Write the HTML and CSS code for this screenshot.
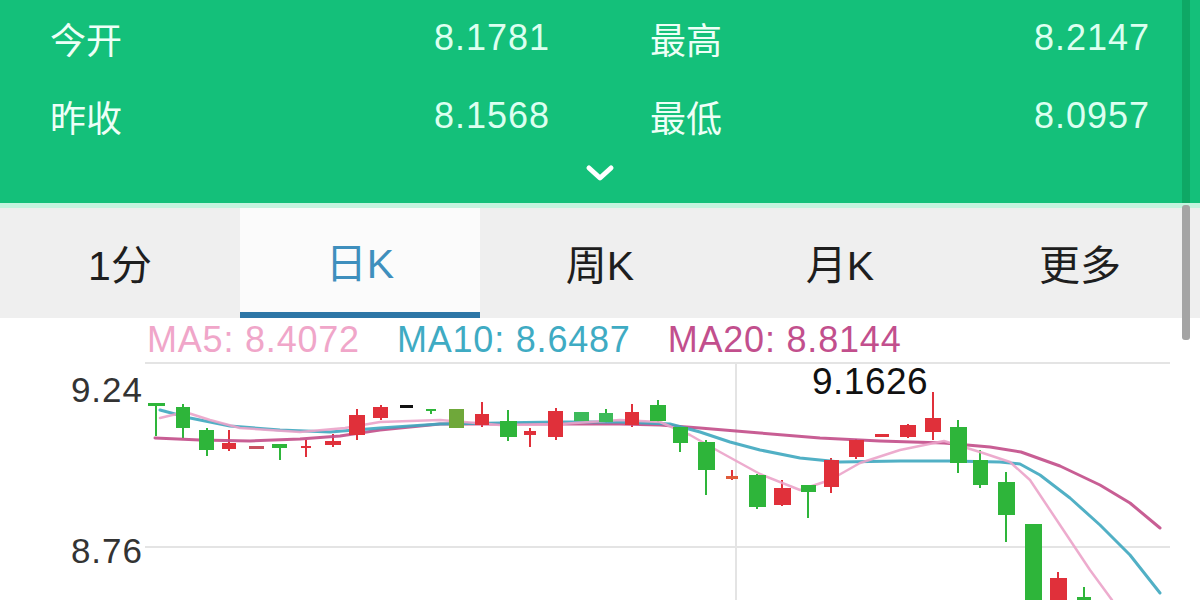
FILE: index.html
```html
<!DOCTYPE html>
<html lang="zh-CN">
<head>
<meta charset="utf-8">
<title>K线</title>
<link rel="stylesheet" href="styles.css">
</head>
<body>
<div class="app">
  <header class="quote">
    <div class="quote-grid">
      <div class="cell"><span class="label">今开</span><span class="value">8.1781</span></div>
      <div class="cell"><span class="label">最高</span><span class="value">8.2147</span></div>
      <div class="cell"><span class="label">昨收</span><span class="value">8.1568</span></div>
      <div class="cell"><span class="label">最低</span><span class="value">8.0957</span></div>
    </div>
    <div class="expand">
      <svg class="chevron" width="30" height="18" viewBox="0 0 30 18"><polyline points="4,4 15,14 26,4" fill="none" stroke="#ffffff" stroke-width="5" stroke-linecap="round" stroke-linejoin="round"/></svg>
    </div>
  </header>
  <nav class="tabs">
    <div class="tab">1分</div>
    <div class="tab active">日K</div>
    <div class="tab">周K</div>
    <div class="tab">月K</div>
    <div class="tab">更多</div>
  </nav>
  <div class="legend">
    <span class="ma5">MA5: 8.4072</span>
    <span class="ma10">MA10: 8.6487</span>
    <span class="ma20">MA20: 8.8144</span>
  </div>
  <div class="chart">
    <svg class="chart-svg" width="1200" height="238" viewBox="0 362 1200 238">
      <g class="grid" stroke="#e4e4e4" stroke-width="2">
        <line x1="145" y1="363" x2="1170" y2="363"/>
        <line x1="145" y1="547" x2="1170" y2="547"/>
        <line x1="736" y1="363" x2="736" y2="600"/>
      </g>
      <text class="axis" x="143" y="402" text-anchor="end">9.24</text>
      <text class="axis" x="143" y="563" text-anchor="end">8.76</text>
      <text class="peak" x="812" y="394">9.1626</text>
      <g class="wicks" stroke-width="2">
        <line x1="156" y1="403" x2="156" y2="436" stroke="#2eb53a"/>
        <line x1="183" y1="404" x2="183" y2="438" stroke="#2eb53a"/>
        <line x1="207" y1="428" x2="207" y2="456" stroke="#2eb53a"/>
        <line x1="229" y1="430" x2="229" y2="451" stroke="#e0303a"/>
        <line x1="280" y1="444" x2="280" y2="460" stroke="#2eb53a"/>
        <line x1="306" y1="440" x2="306" y2="457" stroke="#e0303a"/>
        <line x1="333" y1="434" x2="333" y2="447" stroke="#e0303a"/>
        <line x1="357" y1="409" x2="357" y2="440" stroke="#e0303a"/>
        <line x1="381" y1="405" x2="381" y2="420" stroke="#e0303a"/>
        <line x1="431" y1="409" x2="431" y2="414" stroke="#2eb53a"/>
        <line x1="482" y1="402" x2="482" y2="427" stroke="#e0303a"/>
        <line x1="508" y1="410" x2="508" y2="441" stroke="#2eb53a"/>
        <line x1="530" y1="428" x2="530" y2="447" stroke="#e0303a"/>
        <line x1="556" y1="408" x2="556" y2="440" stroke="#e0303a"/>
        <line x1="606" y1="409" x2="606" y2="423" stroke="#2eb53a"/>
        <line x1="632" y1="404" x2="632" y2="427" stroke="#e0303a"/>
        <line x1="658" y1="400" x2="658" y2="423" stroke="#2eb53a"/>
        <line x1="680" y1="425" x2="680" y2="452" stroke="#2eb53a"/>
        <line x1="706" y1="440" x2="706" y2="495" stroke="#2eb53a"/>
        <line x1="732" y1="470" x2="732" y2="480" stroke="#e0303a"/>
        <line x1="757" y1="474" x2="757" y2="509" stroke="#2eb53a"/>
        <line x1="782" y1="480" x2="782" y2="506" stroke="#e0303a"/>
        <line x1="808" y1="485" x2="808" y2="518" stroke="#2eb53a"/>
        <line x1="831" y1="458" x2="831" y2="493" stroke="#e0303a"/>
        <line x1="856" y1="439" x2="856" y2="459" stroke="#e0303a"/>
        <line x1="908" y1="424" x2="908" y2="438" stroke="#e0303a"/>
        <line x1="933" y1="392" x2="933" y2="440" stroke="#e0303a"/>
        <line x1="958" y1="420" x2="958" y2="473" stroke="#2eb53a"/>
        <line x1="980" y1="450" x2="980" y2="488" stroke="#2eb53a"/>
        <line x1="1006" y1="472" x2="1006" y2="542" stroke="#2eb53a"/>
        <line x1="1058" y1="572" x2="1058" y2="600" stroke="#e0303a"/>
        <line x1="1084" y1="587" x2="1084" y2="600" stroke="#2eb53a"/>
      </g>
      <g class="ma">
        <path d="M155,438 L200,440 L250,441 L300,439 L340,436 L380,430 L440,424 L500,424 L560,424 L620,424 L660,425 L700,428 L760,433 L820,438 L880,441 L944,443 L990,447 L1021,452 L1060,466 L1100,485 L1130,503 L1160,528" stroke="#c24d88" stroke-width="3"/>
        <path d="M160,410 L190,418 L230,426 L280,430 L330,432 L380,428 L440,424 L500,423 L560,422 L620,422 L670,424 L700,432 L730,442 L760,450 L800,458 L840,462 L900,461 L950,461 L1000,462 L1020,464 L1040,475 L1070,498 L1100,525 L1130,555 L1160,593" stroke="#3ea7bf" stroke-width="3"/>
        <path d="M160,418 L185,412 L210,420 L240,428 L300,432 L345,428 L380,422 L440,420 L500,425 L560,424 L620,420 L660,422 L690,435 L720,452 L760,474 L800,490 L830,480 L860,463 L900,450 L944,441 L980,452 L1010,462 L1030,480 L1060,525 L1090,570 L1112,600" stroke="#eba3c9" stroke-width="2.5"/>
      </g>
      <g class="bodies">
        <rect x="148" y="403" width="17" height="3" fill="#2eb53a"/>
        <rect x="176" y="407" width="14" height="21" fill="#2eb53a"/>
        <rect x="199" y="430" width="15" height="20" fill="#2eb53a"/>
        <rect x="222" y="443" width="14" height="6" fill="#e0303a"/>
        <rect x="249" y="446" width="15" height="3" fill="#c85060"/>
        <rect x="272" y="444" width="15" height="4" fill="#2eb53a"/>
        <rect x="301" y="446" width="10" height="2" fill="#e0303a"/>
        <rect x="325" y="441" width="16" height="4" fill="#e0303a"/>
        <rect x="349" y="415" width="16" height="20" fill="#e0303a"/>
        <rect x="373" y="407" width="15" height="11" fill="#e0303a"/>
        <rect x="400" y="405" width="13" height="3" fill="#111111"/>
        <rect x="426" y="409" width="10" height="2" fill="#2eb53a"/>
        <rect x="449" y="409" width="15" height="19" fill="#6fa83a"/>
        <rect x="475" y="414" width="14" height="11" fill="#e0303a"/>
        <rect x="500" y="421" width="17" height="16" fill="#2eb53a"/>
        <rect x="524" y="431" width="12" height="4" fill="#e0303a"/>
        <rect x="548" y="411" width="15" height="26" fill="#e0303a"/>
        <rect x="574" y="412" width="15" height="9" fill="#3dba5a"/>
        <rect x="599" y="413" width="14" height="9" fill="#3dba5a"/>
        <rect x="625" y="412" width="14" height="13" fill="#e0303a"/>
        <rect x="650" y="405" width="16" height="16" fill="#2eb53a"/>
        <rect x="673" y="427" width="15" height="16" fill="#2eb53a"/>
        <rect x="698" y="442" width="17" height="28" fill="#2eb53a"/>
        <rect x="726" y="476" width="12" height="3" fill="#e05a3a"/>
        <rect x="749" y="475" width="17" height="32" fill="#2eb53a"/>
        <rect x="774" y="488" width="17" height="17" fill="#e0303a"/>
        <rect x="801" y="485" width="15" height="7" fill="#2eb53a"/>
        <rect x="824" y="460" width="15" height="27" fill="#e0303a"/>
        <rect x="849" y="440" width="15" height="17" fill="#e0303a"/>
        <rect x="875" y="434" width="14" height="3" fill="#e0303a"/>
        <rect x="900" y="425" width="16" height="12" fill="#e0303a"/>
        <rect x="925" y="418" width="16" height="14" fill="#e0303a"/>
        <rect x="950" y="427" width="17" height="36" fill="#2eb53a"/>
        <rect x="973" y="460" width="15" height="25" fill="#2eb53a"/>
        <rect x="998" y="482" width="17" height="33" fill="#2eb53a"/>
        <rect x="1025" y="524" width="17" height="80" fill="#2eb53a"/>
        <rect x="1050" y="578" width="17" height="26" fill="#e0303a"/>
        <rect x="1077" y="597" width="14" height="6" fill="#2eb53a"/>
      </g>
    </svg>
  </div>
  <div class="scroll-track"></div>
  <div class="scroll-thumb"></div>
</div>
</body>
</html>
```
FILE: styles.css
```css
* { box-sizing: border-box; }
html, body { margin: 0; padding: 0; background: #ffffff; }
body {
  width: 1200px;
  height: 600px;
  overflow: hidden;
  font-family: "Liberation Sans", "Noto Sans CJK SC", sans-serif;
}
.app {
  position: relative;
  width: 1200px;
  height: 600px;
  overflow: hidden;
}
.quote {
  background: #14c07a;
  height: 208px;
  border-bottom: 5px solid #c4f4df;
}
.quote-grid {
  display: grid;
  grid-template-columns: 600px 600px;
  grid-auto-rows: 78px;
  padding-top: 0;
}
.cell {
  display: flex;
  align-items: center;
  justify-content: space-between;
  padding: 0 50px 3px;
}
.label {
  font-size: 36px;
  color: #eefff7;
}
.value {
  font-size: 36px;
  letter-spacing: 1px;
  color: #dcfff0;
}
.expand {
  display: flex;
  justify-content: center;
  padding-top: 8px;
}
.chevron { display: block; }
.tabs {
  display: grid;
  grid-template-columns: repeat(5, 240px);
  height: 110px;
  background: #efefef;
}
.tab {
  display: flex;
  align-items: center;
  justify-content: center;
  font-size: 41px;
  color: #1e1e1e;
  padding-bottom: 2px;
}
.tab.active {
  background: #fbfbfb;
  color: #3f8fbd;
  border-bottom: 6px solid #2d76a6;
  padding-bottom: 0;
}
.legend {
  display: flex;
  gap: 37px;
  height: 44px;
  align-items: center;
  padding-left: 147px;
  font-size: 36px;
  letter-spacing: 0.8px;
  line-height: 1;
}
.ma5 { color: #f0a6c9; }
.ma10 { color: #3fabc3; }
.ma20 { color: #c24f8d; }
.chart { height: 238px; }
.chart-svg { display: block; }
.axis {
  font-family: "Liberation Sans", sans-serif;
  font-size: 35px;
  fill: #333333;
  letter-spacing: 1px;
}
.peak {
  font-family: "Liberation Sans", sans-serif;
  font-size: 37px;
  fill: #111111;
  letter-spacing: 0.5px;
}
.ma path {
  fill: none;
  stroke-linejoin: round;
  stroke-linecap: round;
  opacity: 0.9;
}
.scroll-track {
  position: absolute;
  top: 0;
  left: 1182px;
  width: 8px;
  height: 203px;
  background: #0ea865;
}
.scroll-thumb {
  position: absolute;
  top: 205px;
  left: 1182px;
  width: 8px;
  height: 135px;
  background: #a4a4a4;
  border-radius: 3px;
}
```
